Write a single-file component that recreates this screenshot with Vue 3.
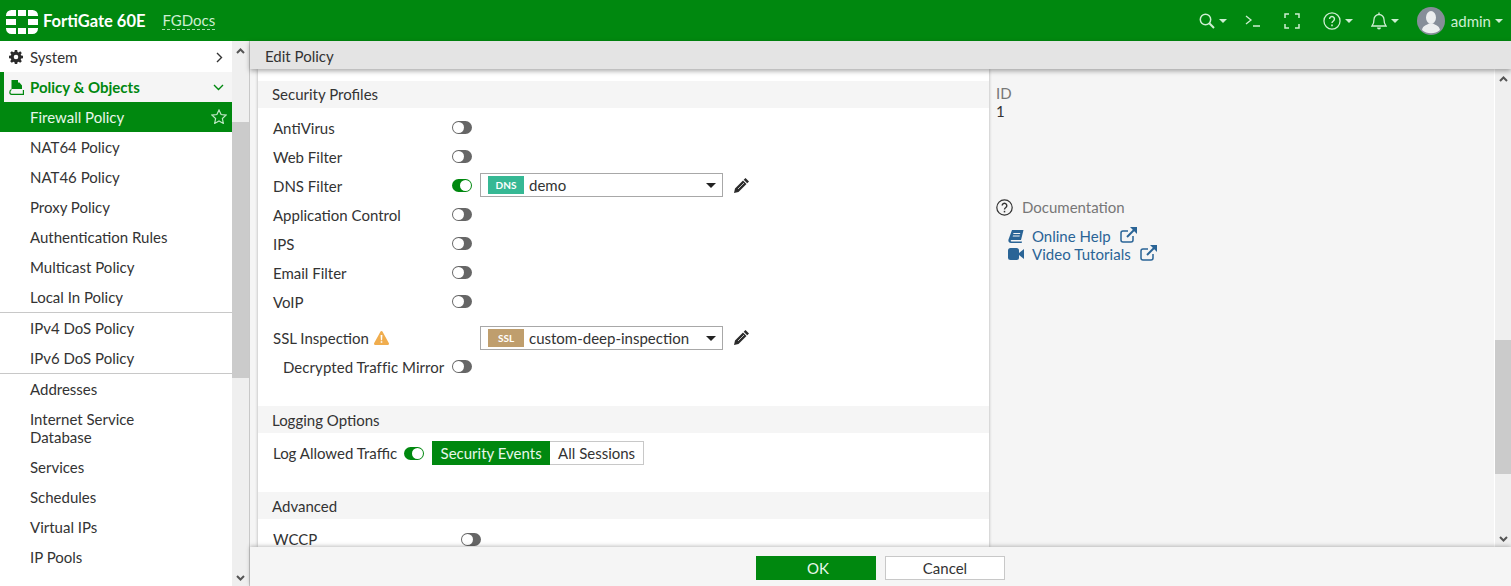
<script setup>
const navTop = ['NAT64 Policy', 'NAT46 Policy', 'Proxy Policy', 'Authentication Rules', 'Multicast Policy', 'Local In Policy']
const navMid = ['IPv4 DoS Policy', 'IPv6 DoS Policy']
const navBot = ['Addresses', 'Internet Service Database', 'Services', 'Schedules', 'Virtual IPs', 'IP Pools']
</script>

<template>
  <div class="page">
    <header class="top">
      <svg class="logo" width="32" height="24" viewBox="0 0 32 24">
        <path fill="#fff" d="M0 6V5.500A5.500 5.500 0 0 1 5.500 0H10v6zM12 0h8v6h-8zM22 0h4.500A5.500 5.500 0 0 1 32 5.500V6H22zM0 9h10v6H0zM22 9h10v6H22zM0 18h10v6H5.500A5.500 5.500 0 0 1 0 18.500zM12 18h8v6h-8zM22 18h10v.5A5.500 5.500 0 0 1 26.500 24H22z"/>
      </svg>
      <span class="brand">FortiGate 60E</span>
      <span class="vdom">FGDocs</span>
      <div class="spacer"></div>
      <div class="tools">
        <span class="tool t1">
          <svg width="16" height="16" viewBox="0 0 16 16" fill="none" stroke="#cdeed2" stroke-width="1.500"><circle cx="6.500" cy="6.500" r="5.200"/><path d="M10.300 10.300l4.700 4.700" stroke-width="2"/></svg>
          <i class="caret"></i>
        </span>
        <span class="tool t2">
          <svg width="16" height="12" viewBox="0 0 16 12" fill="none" stroke="#cdeed2" stroke-width="1.300"><path d="M1 1l5 4-5 4M8 11h7"/></svg>
        </span>
        <span class="tool t3">
          <svg width="16" height="16" viewBox="0 0 16 16" fill="none" stroke="#cdeed2" stroke-width="1.500"><path d="M1 5V1h4M11 1h4v4M15 11v4h-4M5 15H1v-4"/></svg>
        </span>
        <span class="tool t4">
          <svg width="18" height="18" viewBox="0 0 17 17" fill="none" stroke="#cdeed2" stroke-width="1.200"><circle cx="8.500" cy="8.500" r="7.600"/><path d="M6.200 6.600a2.300 2.300 0 1 1 3.600 1.900c-.9.6-1.300 1-1.300 2" stroke-width="1.400"/><path d="M8.500 11.800v1.600" stroke-width="1.500"/></svg>
          <i class="caret"></i>
        </span>
        <span class="tool t5">
          <svg width="16" height="18" viewBox="0 0 16 18" fill="none" stroke="#cdeed2" stroke-width="1.300"><path d="M1 14c1.600-1.800 2-3.200 2-6.500a5 5 0 0 1 10 0c0 3.300.4 4.700 2 6.500z"/><path d="M6 15.500a2 2 0 0 0 4 0z" fill="#cdeed2" stroke="none"/><path d="M8 .5v2"/></svg>
          <i class="caret"></i>
        </span>
        <span class="avatar">
          <svg width="28" height="28" viewBox="0 0 28 28">
            <circle cx="14" cy="14" r="14" fill="#868e99"/>
            <ellipse cx="14" cy="10.500" rx="5" ry="6.500" fill="#eceeef"/>
            <path d="M5 23c1-5 5-5 7-6.500h4c2 1.500 6 1.500 7 6.500a14 14 0 0 1-18 0z" fill="#eceeef"/>
          </svg>
        </span>
        <span class="user">admin</span>
        <i class="caret"></i>
      </div>
    </header>

    <div class="body">
      <aside class="side">
        <nav class="nav">
          <a class="item sys">
            <svg class="ico" width="14" height="14" viewBox="0 0 14 14"><path fill="#2b2b2b" fill-rule="evenodd" d="M5.800 0h2.400l.3 1.900 1.100.5L11.200 1.300l1.600 1.600-1.100 1.600.5 1.100L14 5.800v2.400l-1.800.3-.5 1.100 1.100 1.600-1.600 1.600-1.600-1.100-1.100.5-.3 1.800H5.800l-.3-1.800-1.100-.5-1.600 1.100-1.600-1.600 1.100-1.600-.5-1.100L0 8.200V5.800l1.800-.3.5-1.100-1.100-1.600 1.600-1.600 1.600 1.100 1.100-.5zM7 4.700a2.300 2.300 0 1 0 0 4.600 2.300 2.300 0 0 0 0-4.600z"/></svg>
            <span>System</span>
            <svg class="chev" width="7" height="11" viewBox="0 0 7 11" fill="none" stroke="#333" stroke-width="1.400"><path d="M1 1l4.500 4.500L1 10"/></svg>
          </a>
          <a class="item pol">
            <svg class="ico" width="15" height="15" viewBox="0 0 15 15"><path fill="#00880f" d="M2.500 0h6.500v2.500h1.500L13 5.500V9H2.500z"/><path fill="none" stroke="#00880f" stroke-width="1.200" d="M2.500 9.500C.3 10.500.3 14.400 2.500 14.400h11.900V10"/></svg>
            <span>Policy &amp; Objects</span>
            <svg class="chev" width="11" height="7" viewBox="0 0 11 7" fill="none" stroke="#00880f" stroke-width="1.400"><path d="M1 1l4.500 4.500L10 1"/></svg>
          </a>
          <a class="item act">
            <span>Firewall Policy</span>
            <svg class="star" width="16" height="15" viewBox="0 0 16 15" fill="none" stroke="#bfe8c5" stroke-width="1.200"><path d="M8 1l2.100 4.500 4.900.6-3.600 3.400.9 4.900L8 11.900l-4.300 2.500.9-4.900L1 6.100l4.900-.6z"/></svg>
          </a>
          <a v-for="n in navTop" :key="n" class="item sub"><span>{{ n }}</span></a>
          <div class="rule"></div>
          <a v-for="n in navMid" :key="n" class="item sub"><span>{{ n }}</span></a>
          <div class="rule"></div>
          <a v-for="n in navBot" :key="n" class="item sub" :class="{ two: n.startsWith('Internet') }"><span>{{ n }}</span></a>
        </nav>
        <div class="sb sb-side">
          <svg class="arr" width="9" height="6" viewBox="0 0 9 6" fill="none" stroke="#555" stroke-width="2"><path d="M1 5l3.500-3.500L8 5"/></svg>
          <div class="thumb"></div>
          <div class="spacer"></div>
          <svg class="arr" width="9" height="6" viewBox="0 0 9 6" fill="none" stroke="#555" stroke-width="2"><path d="M1 1l3.500 3.500L8 1"/></svg>
        </div>
      </aside>

      <main class="main">
        <div class="title">Edit Policy</div>
        <div class="content">
          <section class="form">
            <div class="sec first">Security Profiles</div>
            <div class="rows">
              <div class="row"><label>AntiVirus</label><span class="tg"></span></div>
              <div class="row"><label>Web Filter</label><span class="tg"></span></div>
              <div class="row"><label>DNS Filter</label><span class="tg on"></span>
                <div class="sel"><b class="tag dns">DNS</b><span>demo</span><i class="dd"></i></div>
                <svg class="pen" width="15" height="15" viewBox="0 0 15 15"><path fill="#2b2b2b" d="M11.500 0l3.500 3.500-1.800 1.800-3.500-3.500zM9 2.500L12.500 6l-8 8L0 15l1-4.500z"/><path stroke="#fff" stroke-width=".7" fill="none" d="M10 5l-6 6"/></svg>
              </div>
              <div class="row"><label>Application Control</label><span class="tg"></span></div>
              <div class="row"><label>IPS</label><span class="tg"></span></div>
              <div class="row"><label>Email Filter</label><span class="tg"></span></div>
              <div class="row"><label>VoIP</label><span class="tg"></span></div>
              <div class="row ssl"><label>SSL Inspection
                <svg class="warn" width="15" height="14" viewBox="0 0 15 14"><path fill="#f0ad4e" d="M7.500 0c.5 0 .9.300 1.100.7l6.200 11.400c.5.900-.1 1.900-1.100 1.900H1.300C.3 14-.3 13 .2 12.100L6.400.7C6.600.3 7 0 7.500 0z"/><path fill="#fff" d="M6.600 4h1.800l-.3 5.200H6.900zM6.700 10.200h1.600v1.600H6.700z"/></svg>
              </label><span class="tg none"></span>
                <div class="sel"><b class="tag sslt">SSL</b><span>custom-deep-inspection</span><i class="dd"></i></div>
                <svg class="pen" width="15" height="15" viewBox="0 0 15 15"><path fill="#2b2b2b" d="M11.500 0l3.500 3.500-1.800 1.800-3.500-3.500zM9 2.500L12.500 6l-8 8L0 15l1-4.500z"/><path stroke="#fff" stroke-width=".7" fill="none" d="M10 5l-6 6"/></svg>
              </div>
              <div class="row"><label class="ind wide">Decrypted Traffic Mirror</label><span class="tg"></span></div>
            </div>
            <div class="sec logging">Logging Options</div>
            <div class="row log">
              <label class="auto">Log Allowed Traffic</label><span class="tg on"></span>
              <div class="seg"><span class="s-on">Security Events</span><span class="s-off">All Sessions</span></div>
            </div>
            <div class="sec adv">Advanced</div>
            <div class="row wccp"><label class="wc">WCCP</label><span class="tg"></span></div>
          </section>

          <section class="info">
            <div class="id-l">ID</div>
            <div class="id-v">1</div>
            <div class="doc">
              <svg width="17" height="17" viewBox="0 0 17 17" fill="none" stroke="#333" stroke-width="1.200"><circle cx="8.500" cy="8.500" r="7.700"/><path d="M6.200 6.600a2.300 2.300 0 1 1 3.600 1.900c-.9.6-1.300 1-1.300 2" stroke-width="1.400"/><path d="M8.500 11.800v1.600" stroke-width="1.500"/></svg>
              <span>Documentation</span>
            </div>
            <div class="links">
              <a class="lk">
                <svg class="lk-i" width="16" height="13" viewBox="0 0 16 13"><path fill="#2a6496" d="M4 0h11.500L13 10H3.500c-1 0-1.200 1.500 0 1.500H14l-.3 1.500H3c-2 0-3-1.500-2.500-3.500zM5.500 3l-.3 1H12l.3-1zM5 5.500l-.3 1h6.800l.3-1z" fill-rule="evenodd"/></svg>
                <span>Online Help</span>
                <svg class="ext" width="17" height="16" viewBox="0 0 17 16" fill="none" stroke="#2a6496" stroke-width="1.500"><path d="M13 9v4a2 2 0 0 1-2 2H3a2 2 0 0 1-2-2V6a2 2 0 0 1 2-2h5"/><path d="M7 10l8-8" stroke-width="2"/><path fill="#2a6496" stroke="none" d="M10 0h7v7z"/></svg>
              </a>
              <a class="lk">
                <svg class="lk-i" width="16" height="12" viewBox="0 0 16 12"><rect x="0" y="0" width="11" height="12" rx="2.500" fill="#2a6496"/><path fill="#2a6496" d="M11 5l5-4v10l-5-4z"/></svg>
                <span class="wide">Video Tutorials</span>
                <svg class="ext" width="17" height="16" viewBox="0 0 17 16" fill="none" stroke="#2a6496" stroke-width="1.500"><path d="M13 9v4a2 2 0 0 1-2 2H3a2 2 0 0 1-2-2V6a2 2 0 0 1 2-2h5"/><path d="M7 10l8-8" stroke-width="2"/><path fill="#2a6496" stroke="none" d="M10 0h7v7z"/></svg>
              </a>
            </div>
          </section>

          <div class="sb sb-main">
            <svg class="arr" width="9" height="6" viewBox="0 0 9 6" fill="none" stroke="#555" stroke-width="2"><path d="M1 5l3.500-3.500L8 5"/></svg>
            <div class="thumb"></div>
            <div class="spacer"></div>
            <svg class="arr" width="9" height="6" viewBox="0 0 9 6" fill="none" stroke="#555" stroke-width="2"><path d="M1 1l3.500 3.500L8 1"/></svg>
          </div>
        </div>
        <footer class="foot">
          <button class="btn ok">OK</button>
          <button class="btn">Cancel</button>
        </footer>
      </main>
    </div>
  </div>
</template>

<style>
html, body { margin: 0; background: #fff; overflow: hidden; }
</style>

<style scoped>
.page { width: 1511px; height: 586px; display: flex; flex-direction: column; font-family: Lato, "Liberation Sans", sans-serif; font-size: 15px; color: #333; overflow: hidden; }
.spacer { flex: 1; }
.wide { letter-spacing: .06px; }
.top { height: 41px; flex: none; background: #00880f; display: flex; align-items: center; color: #fff; box-sizing: border-box; padding-left: 6px; }
.logo { margin-top: 2px; }
.brand { margin-left: 5px; font-size: 16.500px; font-weight: 700; }
.vdom { margin-left: 17px; font-size: 15px; color: #cdeed2; border-bottom: 1px dashed #a5d8ac; line-height: 18px; }
.tools { display: flex; align-items: center; color: #cdeed2; padding-right: 8px; }
.tool { display: flex; align-items: center; }
.caret { display: inline-block; width: 0; height: 0; border-left: 4px solid transparent; border-right: 4px solid transparent; border-top: 4px solid #cdeed2; margin-left: 4px; }
.t2 { margin-left: 18px; }
.t3 { margin-left: 23px; }
.t4 { margin-left: 23px; }
.t5 { margin-left: 18px; }
.avatar { margin-left: 18px; height: 28px; }
.user { margin-left: 6px; font-size: 15px; }

.body { flex: 1; min-height: 0; display: flex; }
.side { width: 250px; flex: none; display: flex; background: #fff; box-sizing: border-box; border-right: 1px solid #c8c8c8; }
.nav { width: 232px; flex: none; padding-top: 1px; overflow: hidden; }
.item { display: flex; align-items: center; height: 30px; box-sizing: border-box; padding-left: 30px; color: #333; position: relative; }
.ico { position: absolute; left: 9px; top: 8px; }
.sys .chev { position: absolute; left: 216px; top: 10px; }
.pol { background: #f5f5f5; color: #00880f; font-weight: 700; border-left: 4px solid #00880f; padding-left: 26px; }
.pol .ico { left: 5px; }
.pol .chev { position: absolute; left: 209px; top: 12px; }
.act { background: #00880f; color: #e8f7ea; }
.star { position: absolute; left: 211px; top: 7px; }
.sub.two { height: auto; padding-top: 6px; padding-bottom: 6px; line-height: 18px; padding-right: 80px; }
.rule { height: 1px; background: #c8c8c8; }
.sb { width: 16px; flex: none; background: #efefef; display: flex; flex-direction: column; align-items: center; }
.arr { flex: none; margin: 7px 0 5px; }
.thumb { align-self: stretch; background: #cbcbcb; }
.sb-side { width: 17px; }
.sb-side .thumb { margin-top: 63px; height: 256px; }
.sb-main { border-left: 1px solid #fff; margin-left: -1px; }
.sb-main .thumb { margin-top: 253px; height: 134px; }
.main { flex: 1; min-width: 0; display: flex; flex-direction: column; background: #f5f5f5; }
.title { height: 28px; flex: none; background: #e4e4e4; line-height: 31px; padding-left: 15px; box-sizing: border-box; position: relative; z-index: 2; box-shadow: 0 2px 5px rgba(0,0,0,.35); }
.content { flex: 1; min-height: 0; display: flex; overflow: hidden; position: relative; }
.form { width: 731px; margin-left: 8px; flex: none; background: #fff; box-sizing: border-box; box-shadow: 0 0 3px rgba(0,0,0,.3); overflow: hidden; padding-top: 12px; }
.sec { height: 27px; background: #f5f5f5; line-height: 27px; padding-left: 14px; }
.rows { padding-top: 6px; }
.row { display: flex; align-items: center; height: 29px; padding-left: 15px; }
.row label { width: 179px; flex: none; white-space: nowrap; display: flex; align-items: center; margin-bottom: 2px; }
.row .ind { padding-left: 10px; box-sizing: border-box; }
.row.ssl { margin-top: 7px; }
.warn { margin-left: 5px; }
.tg { width: 20px; height: 13px; border-radius: 7px; background: #666; position: relative; flex: none; margin-top: -3px; }
.tg::after { content: ""; position: absolute; left: 1px; top: 1px; width: 11px; height: 11px; border-radius: 50%; background: #fff; }
.tg.on { background: #00880f; }
.tg.on::after { left: 8px; }
.tg.none { visibility: hidden; }
.sel { width: 243px; height: 24px; margin-left: 8px; border: 1px solid #a8a8a8; box-sizing: border-box; display: flex; align-items: center; padding-left: 7px; position: relative; margin-top: -4px; background: #fff; color: #333; }
.ssl .sel { margin-top: -2px; }
.tag { width: 36px; height: 18px; line-height: 18px; text-align: center; font-size: 10px; color: #fff; font-weight: 700; margin-right: 5px; }
.dns { background: #36b894; }
.sslt { background: #bf9e6d; }
.dd { position: absolute; right: 6px; top: 9px; width: 0; height: 0; border-left: 5px solid transparent; border-right: 5px solid transparent; border-top: 5px solid #222; }
.pen { margin-left: 11px; margin-top: -3px; }
.logging { margin-top: 24px; line-height: 29px; }
.log { height: 41px; padding-left: 15px; }
.row label.auto { width: auto; }
.log .tg { margin-left: 7px; margin-top: 0; }
.seg { display: flex; height: 24px; margin-left: 8px; margin-bottom: 2px; }
.seg span { line-height: 24px; box-sizing: border-box; }
.s-on { background: #00880f; color: #e8f7ea; width: 118px; text-align: center; }
.s-off { border: 1px solid #c8c8c8; border-left: 0; width: 94px; text-align: center; line-height: 22px !important; color: #333; }
.adv { margin-top: 18px; line-height: 29px; }
.wccp { margin-top: 6px; }
.wccp .tg { margin-top: -1px; }
.row label.wc { width: 188px; }
.info { flex: 1; min-width: 0; padding: 15px 0 0 6px; box-sizing: border-box; color: #333; margin-left: 1px; }
.id-l { color: #777; line-height: 18px; }
.id-v { line-height: 18px; }
.doc { display: flex; align-items: center; margin-top: 77px; color: #777; height: 20px; }
.doc span { margin-left: 9px; }
.links { margin-top: 10px; padding-left: 12px; }
.lk { display: flex; align-items: center; height: 18px; color: #2a6496; }
.lk-i { margin-right: 8px; }
.ext { margin-left: 9px; margin-top: -3px; }
.foot { height: 39px; flex: none; background: #f5f5f5; display: flex; justify-content: center; align-items: center; gap: 9px; box-shadow: 0 -1px 4px rgba(0,0,0,.25); position: relative; z-index: 2; padding-top: 3px; box-sizing: border-box; }
.btn { width: 120px; height: 24px; border: 1px solid #c8c8c8; background: #fff; font: inherit; color: #333; padding: 0; }
.ok { background: #00880f; border-color: #00880f; color: #e8f7ea; padding-left: 4px; }
</style>
